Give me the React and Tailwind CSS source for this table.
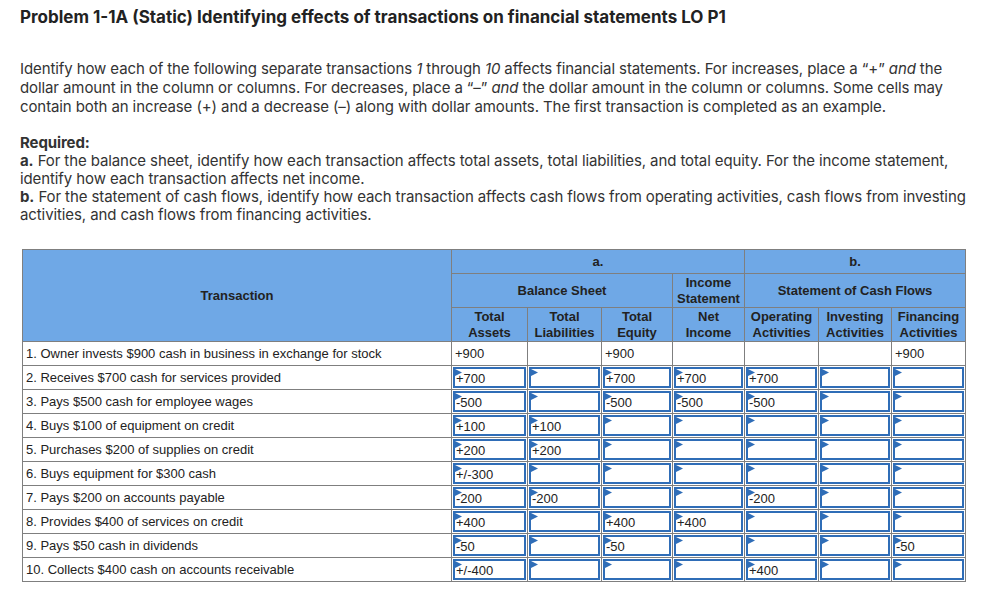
import React from "react";

const rows = [
  ["1. Owner invests $900 cash in business in exchange for stock", ["+900", "", "+900", "", "", "", "+900"], false],
  ["2. Receives $700 cash for services provided", ["+700", "", "+700", "+700", "+700", "", ""], true],
  ["3. Pays $500 cash for employee wages", ["-500", "", "-500", "-500", "-500", "", ""], true],
  ["4. Buys $100 of equipment on credit", ["+100", "+100", "", "", "", "", ""], true],
  ["5. Purchases $200 of supplies on credit", ["+200", "+200", "", "", "", "", ""], true],
  ["6. Buys equipment for $300 cash", ["+/-300", "", "", "", "", "", ""], true],
  ["7. Pays $200 on accounts payable", ["-200", "-200", "", "", "-200", "", ""], true],
  ["8. Provides $400 of services on credit", ["+400", "", "+400", "+400", "", "", ""], true],
  ["9. Pays $50 cash in dividends", ["-50", "", "-50", "", "", "", "-50"], true],
  ["10. Collects $400 cash on accounts receivable", ["+/-400", "", "", "", "+400", "", ""], true],
];

const colWidths = [429, 76, 74, 71, 72, 74, 73, 74];

function InputCell({ value }) {
  return (
    <div className="relative h-[21px] border-2 border-[#2f6db7] bg-white pl-[1px] pt-[2px] leading-[15px]">
      <svg className="absolute left-0 top-0" width="7" height="7" viewBox="0 0 7 7">
        <polygon points="0,0 7,3.5 0,7" fill="#2f6db7" />
      </svg>
      {value}
    </div>
  );
}

export default function App() {
  const th = "border border-[#7f7f7f] bg-[#6fa8e6] text-center font-bold text-[#222] leading-[16px]";
  return (
    <div className="min-h-screen bg-white text-[#222]" style={{ fontFamily: "Inter, 'Open Sans', sans-serif" }}>
      <div className="px-5 pt-[6px]">
        <h1 className="text-[17px] font-bold leading-[22px] text-[#222]">
          Problem 1-1A (Static) Identifying effects of transactions on financial statements LO P1
        </h1>

        <p className="mt-[31px] w-[935px] text-[15px] leading-[19px] tracking-[-0.1px] text-[#333]">
          Identify how each of the following separate transactions <i>1</i> through <i>10</i> affects financial statements. For increases, place a “+” <i>and</i> the dollar amount in the column or columns. For decreases, place a “–” <i>and</i> the dollar amount in the column or columns. Some cells may contain both an increase (+) and a decrease (–) along with dollar amounts. The first transaction is completed as an example.
        </p>

        <div className="mt-[18px] w-[955px] text-[15px] leading-[18px] tracking-[-0.1px] text-[#333]">
          <div className="font-bold">Required:</div>
          <div>
            <b>a.</b> For the balance sheet, identify how each transaction affects total assets, total liabilities, and total equity. For the income statement, identify how each transaction affects net income.
          </div>
          <div>
            <b>b.</b> For the statement of cash flows, identify how each transaction affects cash flows from operating activities, cash flows from investing activities, and cash flows from financing activities.
          </div>
        </div>
      </div>

      <table
        className="ml-[22px] mt-[25px] border-collapse text-[13px]"
        style={{ fontFamily: "'Liberation Sans', Arial, sans-serif", tableLayout: "fixed" }}
      >
        <colgroup>
          {colWidths.map((w, i) => (
            <col key={i} style={{ width: w }} />
          ))}
        </colgroup>
        <thead>
          <tr className="h-[24px]">
            <th rowSpan={3} className={th}>Transaction</th>
            <th colSpan={4} className={th}>a.</th>
            <th colSpan={3} className={th}>b.</th>
          </tr>
          <tr className="h-[34px]">
            <th colSpan={3} className={th}>Balance Sheet</th>
            <th className={th}>Income<br />Statement</th>
            <th colSpan={3} className={th}>Statement of Cash Flows</th>
          </tr>
          <tr className="h-[34px]">
            <th className={th}>Total<br />Assets</th>
            <th className={th}>Total<br />Liabilities</th>
            <th className={th}>Total<br />Equity</th>
            <th className={th}>Net<br />Income</th>
            <th className={th}>Operating<br />Activities</th>
            <th className={th}>Investing<br />Activities</th>
            <th className={th}>Financing<br />Activities</th>
          </tr>
        </thead>
        <tbody>
          {rows.map(([label, vals, editable], r) => (
            <tr key={r} className="h-[24px]">
              <td className="border border-[#7f7f7f] px-[3px] leading-[16px]">{label}</td>
              {vals.map((v, c) =>
                editable ? (
                  <td key={c} className="border border-[#7f7f7f] p-[1px]">
                    <InputCell value={v} />
                  </td>
                ) : (
                  <td key={c} className="border border-[#7f7f7f] px-[3px] leading-[16px]">{v}</td>
                )
              )}
            </tr>
          ))}
        </tbody>
      </table>
    </div>
  );
}
